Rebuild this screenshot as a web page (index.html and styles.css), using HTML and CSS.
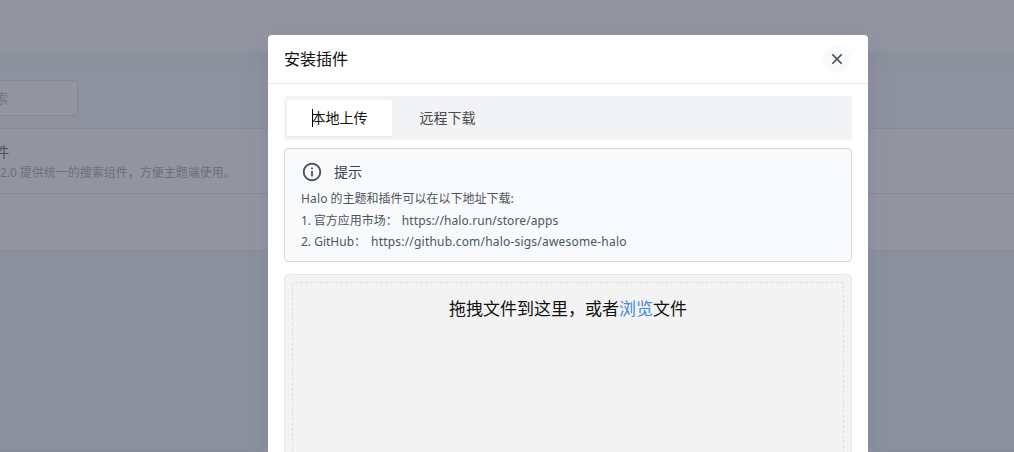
FILE: index.html
```html
<!DOCTYPE html>
<html lang="zh-CN">
<head>
<meta charset="utf-8">
<title>安装插件</title>
<link rel="stylesheet" href="styles.css">
</head>
<body>
<div class="page">
  <header class="page-header"></header>
  <main class="card">
    <div class="toolbar"><div class="search">索</div></div>
    <div class="plugin">
      <div class="plugin-name">件</div>
      <div class="plugin-desc"><span class="latin">2.0</span> 提供统一的搜索组件，方便主题端使用。</div>
    </div>
    <div class="card-footer"></div>
  </main>
</div>
<section class="modal">
  <header class="modal-header">
    <h1>安装插件</h1>
    <button class="close" aria-label="关闭">
      <svg width="20" height="20" viewBox="0 0 24 24"><path fill="currentColor" d="m12 10.586 4.95-4.95 1.414 1.414-4.95 4.95 4.95 4.95-1.414 1.414-4.95-4.95-4.95 4.95-1.414-1.414 4.95-4.95-4.95-4.95L7.05 5.636z"/></svg>
    </button>
  </header>
  <div class="modal-body">
    <nav class="tabs">
      <div class="tab active">本地上传</div>
      <div class="tab">远程下载</div>
    </nav>
    <div class="alert">
      <div class="alert-title">
        <svg width="22" height="22" viewBox="0 0 24 24"><path fill="currentColor" d="M12 22C6.477 22 2 17.523 2 12S6.477 2 12 2s10 4.477 10 10-4.477 10-10 10zm0-2a8 8 0 1 0 0-16 8 8 0 0 0 0 16zM11 7h2v2h-2V7zm0 4h2v6h-2v-6z"/></svg>
        <span>提示</span>
      </div>
      <p><span class="latin intro">Halo</span> 的主题和插件可以在以下地址下载:</p>
      <p><span class="latin">1.</span> 官方应用市场：<span class="url store">https://halo.run/store/apps</span></p>
      <p class="last"><span class="latin">2. GitHub</span>：<span class="url repo">https://github.com/halo-sigs/awesome-halo</span></p>
    </div>
    <div class="upload">
      <div class="drop">拖拽文件到这里，或者<span class="browse">浏览</span>文件</div>
    </div>
  </div>
</section>
</body>
</html>
```
FILE: styles.css
```css
* { box-sizing: border-box; }
body {
  margin: 0;
  height: 452px;
  overflow: hidden;
  background: #8b919d;
  border-bottom: 1px solid #888c98;
  font-family: "Noto Sans CJK SC", sans-serif;
}
.page-header { height: 51px; background: #9295a0; }
.card { margin-top: 16px; background: #9295a0; }
.toolbar {
  height: 62px;
  padding-top: 12px;
  background: #8d929e;
  border-top: 1px solid #898e9a;
  border-bottom: 1px solid #888c98;
}
.search {
  width: 78px;
  height: 36px;
  border: 1px solid #858995;
  border-left: 0;
  border-radius: 0 4px 4px 0;
  background: #9295a0;
  color: #737985;
  font-size: 13px;
  line-height: 34px;
  text-indent: -5px;
}
.plugin {
  height: 65px;
  padding-top: 12px;
  border-bottom: 1px solid #868a97;
  white-space: nowrap;
}
.plugin-name { color: #4b4e60; font-size: 14px; line-height: 20px; text-indent: -5px; }
.plugin-desc { color: #6a707d; font-size: 12px; line-height: 20px; margin-top: 1px; }
.card-footer { height: 57px; border-bottom: 1px solid #888c98; }
.latin, .url { font-family: "Noto Sans", "Open Sans", sans-serif; }
.modal {
  position: absolute;
  top: 35px;
  bottom: 0;
  left: 268px;
  display: flex;
  flex-direction: column;
  width: 600px;
  background: #fff;
  border-radius: 4px 4px 0 0;
  box-shadow: 0 8px 24px rgba(60, 70, 110, .12);
}
.modal-header {
  display: flex;
  flex: none;
  align-items: center;
  justify-content: space-between;
  height: 49px;
  padding: 0 17px 0 16px;
  border-bottom: 1px solid #e5e7eb;
}
h1 { margin: 0; padding-bottom: 2px; font-size: 16px; font-weight: 400; line-height: 24px; color: #111; }
.close {
  display: grid;
  place-items: center;
  width: 28px;
  height: 28px;
  padding: 0;
  border: 0;
  border-radius: 50%;
  background: #f9fafb;
  color: #4b5563;
}
.modal-body { display: flex; flex: 1; flex-direction: column; padding: 12px 16px 0; }
.tabs {
  display: flex;
  flex: none;
  height: 44px;
  padding: 4px 3px;
  border-radius: 4px;
  background: #f2f3f5;
}
.tab {
  width: 105px;
  height: 36px;
  margin-right: 3px;
  font-size: 14px;
  line-height: 34px;
  text-align: center;
  color: #484b50;
}
.tab.active {
  position: relative;
  background: #fff;
  border-radius: 2px;
  color: #111;
  box-shadow: 0 1px 2px rgba(0, 0, 0, .06);
}
.tab.active::before {
  content: "";
  position: absolute;
  left: 25px;
  top: 9px;
  width: 1px;
  height: 18px;
  background: #000;
}
.alert {
  flex: none;
  height: 114px;
  margin-top: 8px;
  padding: 12px 16px;
  border: 1px solid #d1d5db;
  border-radius: 4px;
  background: #f9fafc;
  color: #4b5563;
}
.alert-title { display: flex; align-items: center; gap: 11px; height: 22px; margin-bottom: 4px; font-size: 14px; }
.alert-title span { padding-bottom: 2px; color: #374151; }
p { margin: 0; font-size: 12px; line-height: 21px; white-space: nowrap; }
.last { line-height: 19px; }
.intro { letter-spacing: .2px; }
.url { margin-left: 4px; }
.store { letter-spacing: .1px; }
.repo { letter-spacing: .2px; margin-left: 5px; }
.upload {
  flex: 1;
  margin-top: 12px;
  padding: 7px 7px 0;
  border: 1px solid #e8e8e8;
  border-bottom: 0;
  border-radius: 5px 5px 0 0;
  background: #f3f3f3;
}
.drop {
  height: 100%;
  padding-top: 13px;
  border: 1px dashed #dedede;
  border-bottom: 0;
  border-radius: 3px 3px 0 0;
  font-size: 17px;
  line-height: 24px;
  text-align: center;
  color: #111;
}
.browse { color: #3b8ae6; }
```
